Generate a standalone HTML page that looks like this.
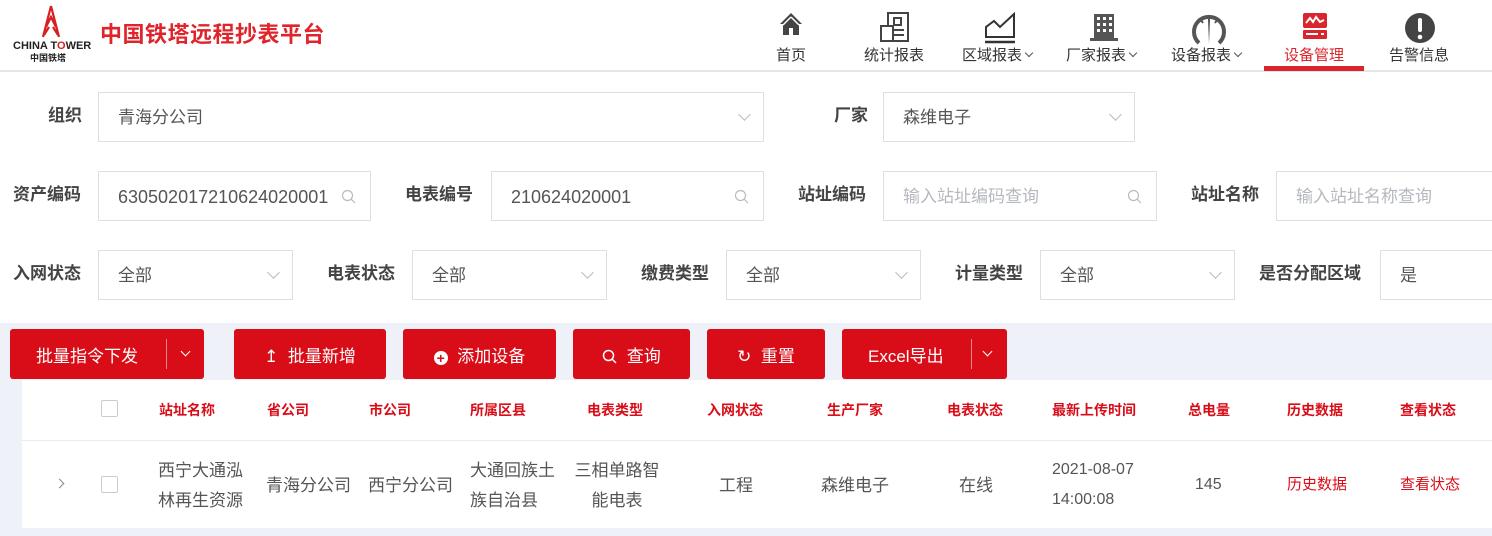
<!DOCTYPE html>
<html><head><meta charset="utf-8"><style>
*{margin:0;padding:0;box-sizing:border-box}
body{width:1492px;height:536px;overflow:hidden;background:#fff;font-family:"Liberation Sans","Noto Sans CJK SC",sans-serif;position:relative;color:#333}
.a{position:absolute}
.hdr{left:0;top:0;width:1492px;height:72px;border-bottom:2px solid #e6e6e6;background:#fff}
.nav{top:0;height:72px;text-align:center;font-size:15px;color:#333}
.nav svg{position:absolute;top:12px}
.nav span{position:absolute;top:46px;white-space:nowrap;line-height:20px}
.dv{display:inline-block;width:6px;height:6px;border-right:1px solid #555;border-bottom:1px solid #555;transform:rotate(45deg);margin-left:4px;vertical-align:4px}
.lbl{font-size:17px;font-weight:bold;color:#444;white-space:nowrap;line-height:20px}
.inp{border:1px solid #dcdfe6;height:50px;font-size:17px;color:#555;padding-left:19px;padding-top:2px;line-height:46px;background:#fff;white-space:nowrap}
.inp .ph{color:#b5b8bf}
.chev{position:absolute;right:14px;top:17px;width:9px;height:9px;border-right:1px solid #bbb;border-bottom:1px solid #bbb;transform:rotate(45deg)}
.srch{position:absolute;right:14px;top:17px}
.btn{top:329px;height:50px;background:#d80d18;border-radius:3px;color:#fff;font-size:17px;line-height:50px;padding-top:3px;text-align:center}
.th{top:400px;font-size:14px;font-weight:bold;color:#d80d18;white-space:nowrap;text-align:center;line-height:20px}
.td{font-size:17px;color:#555;text-align:center;line-height:30px}
.cb{width:17px;height:17px;border:1px solid #ccc;border-radius:2px;background:#fff}
</style></head><body>
<div class="a hdr"></div>
<svg class="a" style="left:36px;top:5px" width="30" height="34" viewBox="0 0 30 34"><path d="M15 1 L7 32 M15 1 L23 32 M10 22 L15 12 L20 22 M8 30 L13 22 M22 30 L17 22" stroke="#d81e22" stroke-width="2.2" fill="none"/></svg>
<div class="a" style="left:13px;top:40px;font-size:11px;font-weight:bold;color:#222;line-height:12px">CHINA T<span style="color:#d81e22">O</span>WER</div>
<div class="a" style="left:30px;top:53px;font-size:9px;font-weight:bold;color:#222;line-height:10px">中国铁塔</div>
<div class="a" style="left:100px;top:22px;font-size:22px;font-weight:bold;color:#e0242b;letter-spacing:0.5px;line-height:26px">中国铁塔远程抄表平台</div>
<div class="a nav" style="left:770px;width:42px"><svg style="left:9px" width="24" height="24" viewBox="0 0 24 24"><path d="M12 1 L1 12 L4 12 L4 23 L10 23 L10 16 L14 16 L14 23 L20 23 L20 12 L23 12Z" fill="#444"/><path d="M12 5 L4 13 M12 5 L20 13" stroke="#fff" stroke-width="1.5"/></svg><span style="left:6px">首页</span></div>
<div class="a nav" style="left:862px;width:66px"><svg style="left:18px" width="30" height="30" viewBox="0 0 30 30"><rect x="8" y="1" width="20" height="28" fill="none" stroke="#444" stroke-width="2"/><rect x="1" y="14" width="12" height="15" fill="#fff" stroke="#444" stroke-width="2"/><rect x="14" y="6" width="7" height="7" fill="none" stroke="#444" stroke-width="2"/><path d="M14 18 H24 M14 23 H24" stroke="#444" stroke-width="2"/></svg><span style="left:2px">统计报表</span></div>
<div class="a nav" style="left:962px;width:76px"><svg style="left:22px" width="32" height="32" viewBox="0 0 32 32"><path d="M2 25 L2 15 L10 9 L16 15 L30 2 L30 25Z" fill="none" stroke="#333" stroke-width="2"/><path d="M1 30 H31" stroke="#333" stroke-width="2.5"/></svg><span style="left:0">区域报表<i class="dv"></i></span></div>
<div class="a nav" style="left:1066px;width:76px"><svg style="left:23px" width="30" height="30" viewBox="0 0 30 30"><rect x="5" y="2" width="20" height="24" fill="#555"/><rect x="1" y="26" width="28" height="3" fill="#555"/><g fill="#fff"><rect x="8" y="5" width="3" height="3"/><rect x="14" y="5" width="3" height="3"/><rect x="20" y="5" width="3" height="3"/><rect x="8" y="11" width="3" height="3"/><rect x="14" y="11" width="3" height="3"/><rect x="20" y="11" width="3" height="3"/><rect x="8" y="17" width="3" height="3"/><rect x="14" y="17" width="3" height="3"/><rect x="20" y="17" width="3" height="3"/></g></svg><span style="left:0">厂家报表<i class="dv"></i></span></div>
<div class="a nav" style="left:1171px;width:76px"><svg style="left:20px" width="36" height="34" viewBox="0 0 36 34"><path d="M8 31 A15 15 0 1 1 28 31" fill="none" stroke="#555" stroke-width="4"/><path d="M17 8 L18 32 L19 8Z" fill="#555"/><path d="M18 4 V8 M10 8 L12 11 M26 8 L24 11" stroke="#555" stroke-width="2"/></svg><span style="left:0">设备报表<i class="dv"></i></span></div>
<div class="a nav" style="left:1264px;width:100px"><svg style="left:38px" width="26" height="28" viewBox="0 0 26 28"><rect x="1" y="1" width="24" height="15" rx="2" fill="#d8262c"/><path d="M4 11 L8 6 L11 10 L14 5 L18 10 L22 8" stroke="#fff" stroke-width="2" fill="none"/><rect x="1" y="18" width="24" height="9" rx="1" fill="#d8262c"/><rect x="4" y="21" width="12" height="2" fill="#fff"/><rect x="19" y="21" width="3" height="2" fill="#fff"/></svg><span style="left:20px;color:#d8262c">设备管理</span><div class="a" style="left:0;top:66px;width:100px;height:5px;background:#d8262c"></div></div>
<div class="a nav" style="left:1388px;width:64px"><svg style="left:16px" width="32" height="32" viewBox="0 0 32 32"><circle cx="16" cy="16" r="15" fill="#444"/><rect x="14" y="6" width="4" height="14" rx="2" fill="#fff"/><circle cx="16" cy="25" r="2.3" fill="#fff"/></svg><span style="left:1px">告警信息</span></div>

<div class="a lbl" style="left:48px;top:106px">组织</div>
<div class="a inp" style="left:98px;top:92px;width:666px">青海分公司<i class="chev"></i></div>
<div class="a lbl" style="left:834px;top:106px">厂家</div>
<div class="a inp" style="left:883px;top:92px;width:252px">森维电子<i class="chev"></i></div>

<div class="a lbl" style="left:13px;top:185px">资产编码</div>
<div class="a inp" style="left:98px;top:171px;width:273px;font-size:18px">630502017210624020001<svg class="srch" width="15" height="15" viewBox="0 0 15 15"><circle cx="6.5" cy="6.5" r="5" fill="none" stroke="#bbb" stroke-width="1.2"/><path d="M10 10 L14 14" stroke="#bbb" stroke-width="1.2"/></svg></div>
<div class="a lbl" style="left:405px;top:185px">电表编号</div>
<div class="a inp" style="left:491px;top:171px;width:273px;font-size:18px">210624020001<svg class="srch" width="15" height="15" viewBox="0 0 15 15"><circle cx="6.5" cy="6.5" r="5" fill="none" stroke="#bbb" stroke-width="1.2"/><path d="M10 10 L14 14" stroke="#bbb" stroke-width="1.2"/></svg></div>
<div class="a lbl" style="left:798px;top:185px">站址编码</div>
<div class="a inp" style="left:883px;top:171px;width:274px"><span class="ph">输入站址编码查询</span><svg class="srch" width="15" height="15" viewBox="0 0 15 15"><circle cx="6.5" cy="6.5" r="5" fill="none" stroke="#bbb" stroke-width="1.2"/><path d="M10 10 L14 14" stroke="#bbb" stroke-width="1.2"/></svg></div>
<div class="a lbl" style="left:1191px;top:185px">站址名称</div>
<div class="a inp" style="left:1276px;top:171px;width:230px"><span class="ph">输入站址名称查询</span></div>

<div class="a lbl" style="left:13px;top:264px">入网状态</div>
<div class="a inp" style="left:98px;top:250px;width:195px">全部<i class="chev"></i></div>
<div class="a lbl" style="left:327px;top:264px">电表状态</div>
<div class="a inp" style="left:412px;top:250px;width:195px">全部<i class="chev"></i></div>
<div class="a lbl" style="left:641px;top:264px">缴费类型</div>
<div class="a inp" style="left:726px;top:250px;width:195px">全部<i class="chev"></i></div>
<div class="a lbl" style="left:955px;top:264px">计量类型</div>
<div class="a inp" style="left:1040px;top:250px;width:195px">全部<i class="chev"></i></div>
<div class="a lbl" style="left:1259px;top:264px">是否分配区域</div>
<div class="a inp" style="left:1380px;top:250px;width:130px">是</div>

<div class="a" style="left:0;top:323px;width:1492px;height:213px;background:#eef1f7"></div>
<div class="a btn" style="left:10px;width:194px"><span style="position:absolute;left:26px">批量指令下发</span><div class="a" style="left:156px;top:10px;width:1px;height:30px;background:#e9868b"></div><i style="position:absolute;left:172px;top:19px;width:7px;height:7px;border-right:1.3px solid #fff;border-bottom:1.3px solid #fff;transform:rotate(45deg)"></i></div>
<div class="a btn" style="left:234px;width:152px">↥&nbsp; 批量新增</div>
<div class="a btn" style="left:403px;width:153px"><span style="display:inline-block;width:14px;height:14px;border-radius:50%;background:#fff;color:#d80d18;font-size:14px;line-height:14px;font-weight:bold;vertical-align:-1px">+</span>&nbsp; 添加设备</div>
<div class="a btn" style="left:573px;width:117px"><svg width="15" height="15" viewBox="0 0 15 15" style="vertical-align:-2px"><circle cx="6.5" cy="6.5" r="5" fill="none" stroke="#fff" stroke-width="1.5"/><path d="M10 10 L14 14" stroke="#fff" stroke-width="1.5"/></svg>&nbsp; 查询</div>
<div class="a btn" style="left:707px;width:118px">↻&nbsp; 重置</div>
<div class="a btn" style="left:842px;width:165px"><span style="position:absolute;left:26px">Excel导出</span><div class="a" style="left:129px;top:10px;width:1px;height:30px;background:#e9868b"></div><i style="position:absolute;left:142px;top:19px;width:7px;height:7px;border-right:1.3px solid #fff;border-bottom:1.3px solid #fff;transform:rotate(45deg)"></i></div>

<div class="a" style="left:22px;top:380px;width:1470px;height:148px;background:#fff"></div>
<div class="a" style="left:22px;top:440px;width:1470px;height:1px;background:#e8ebf0"></div>
<div class="a cb" style="left:101px;top:400px"></div>
<div class="a th" style="left:159px">站址名称</div>
<div class="a th" style="left:267px">省公司</div>
<div class="a th" style="left:369px">市公司</div>
<div class="a th" style="left:470px">所属区县</div>
<div class="a th" style="left:587px">电表类型</div>
<div class="a th" style="left:707px">入网状态</div>
<div class="a th" style="left:827px">生产厂家</div>
<div class="a th" style="left:947px">电表状态</div>
<div class="a th" style="left:1052px">最新上传时间</div>
<div class="a th" style="left:1188px">总电量</div>
<div class="a th" style="left:1287px">历史数据</div>
<div class="a th" style="left:1400px">查看状态</div>

<div class="a" style="left:56px;top:480px;width:7px;height:7px;border-right:1px solid #888;border-top:1px solid #888;transform:rotate(45deg)"></div>
<div class="a cb" style="left:101px;top:476px"></div>
<div class="a td" style="left:158px;top:456px;text-align:left">西宁大通泓<br>林再生资源</div>
<div class="a td" style="left:266px;top:471px">青海分公司</div>
<div class="a td" style="left:368px;top:471px">西宁分公司</div>
<div class="a td" style="left:470px;top:456px;text-align:left">大通回族土<br>族自治县</div>
<div class="a td" style="left:573px;top:456px;width:88px">三相单路智<br>能电表</div>
<div class="a td" style="left:719px;top:471px">工程</div>
<div class="a td" style="left:821px;top:471px">森维电子</div>
<div class="a td" style="left:959px;top:471px">在线</div>
<div class="a td" style="left:1052px;top:455px;font-size:16px;text-align:left">2021-08-07<br>14:00:08</div>
<div class="a td" style="left:1195px;top:470px;font-size:16px">145</div>
<div class="a td" style="left:1287px;top:470px;font-size:15px;color:#d80d18">历史数据</div>
<div class="a td" style="left:1400px;top:470px;font-size:15px;color:#d80d18">查看状态</div>
</body></html>
